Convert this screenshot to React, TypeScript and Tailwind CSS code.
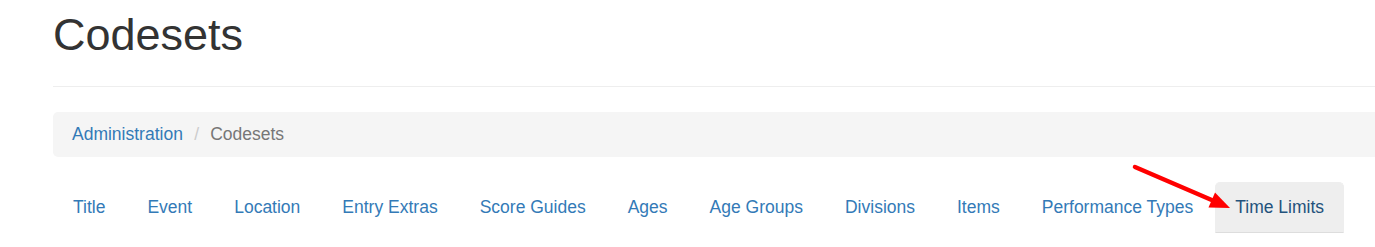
import * as React from "react";

const tabs = [
  "Title",
  "Event",
  "Location",
  "Entry Extras",
  "Score Guides",
  "Ages",
  "Age Groups",
  "Divisions",
  "Items",
  "Performance Types",
  "Time Limits",
];

export default function App() {
  const active = "Time Limits";

  return (
    <div
      className="relative w-[1375px] h-[247px] overflow-hidden bg-white text-[17.5px] text-[#333]"
      style={{ fontFamily: '"Liberation Sans", Arial, Helvetica, sans-serif' }}
    >
      <div className="pl-[53px] w-[1420px]">
        <div className="pt-[10px] pb-[26.5px] border-b border-[#eee]">
          <h1 className="text-[45px] leading-[49.5px] font-normal text-[#333]">Codesets</h1>
        </div>

        <ol className="mt-[25px] flex items-center h-[45px] px-[19px] bg-[#f5f5f5] rounded-[5px] list-none">
          <li>
            <a href="#" className="text-[#337ab7]">
              Administration
            </a>
          </li>
          <li className="flex items-center ml-[5px]">
            <span className="px-[6.25px] text-[#ccc]">/&nbsp;</span>
            <span className="text-[#777]">Codesets</span>
          </li>
        </ol>

        <ul className="mt-[25px] flex list-none">
          {tabs.map((t) => (
            <li key={t} className="mr-[2px]">
              <a
                href="#"
                className={
                  t === active
                    ? "block px-[19px] py-[12px] leading-[25px] border border-[#eee] border-b-[#ddd] bg-[#eee] rounded-t-[5px] text-[#23527c]"
                    : "block px-[19px] py-[12px] leading-[25px] border border-transparent rounded-t-[5px] text-[#337ab7]"
                }
              >
                {t}
              </a>
            </li>
          ))}
        </ul>
      </div>

      <svg className="absolute left-0 top-0 pointer-events-none" width="1375" height="247">
        <line x1="1135" y1="167" x2="1214" y2="201" stroke="#ff0000" strokeWidth="4.5" strokeLinecap="round" />
        <polygon points="1230,208 1215,192.5 1208.5,207.5" fill="#ff0000" />
      </svg>
    </div>
  );
}
